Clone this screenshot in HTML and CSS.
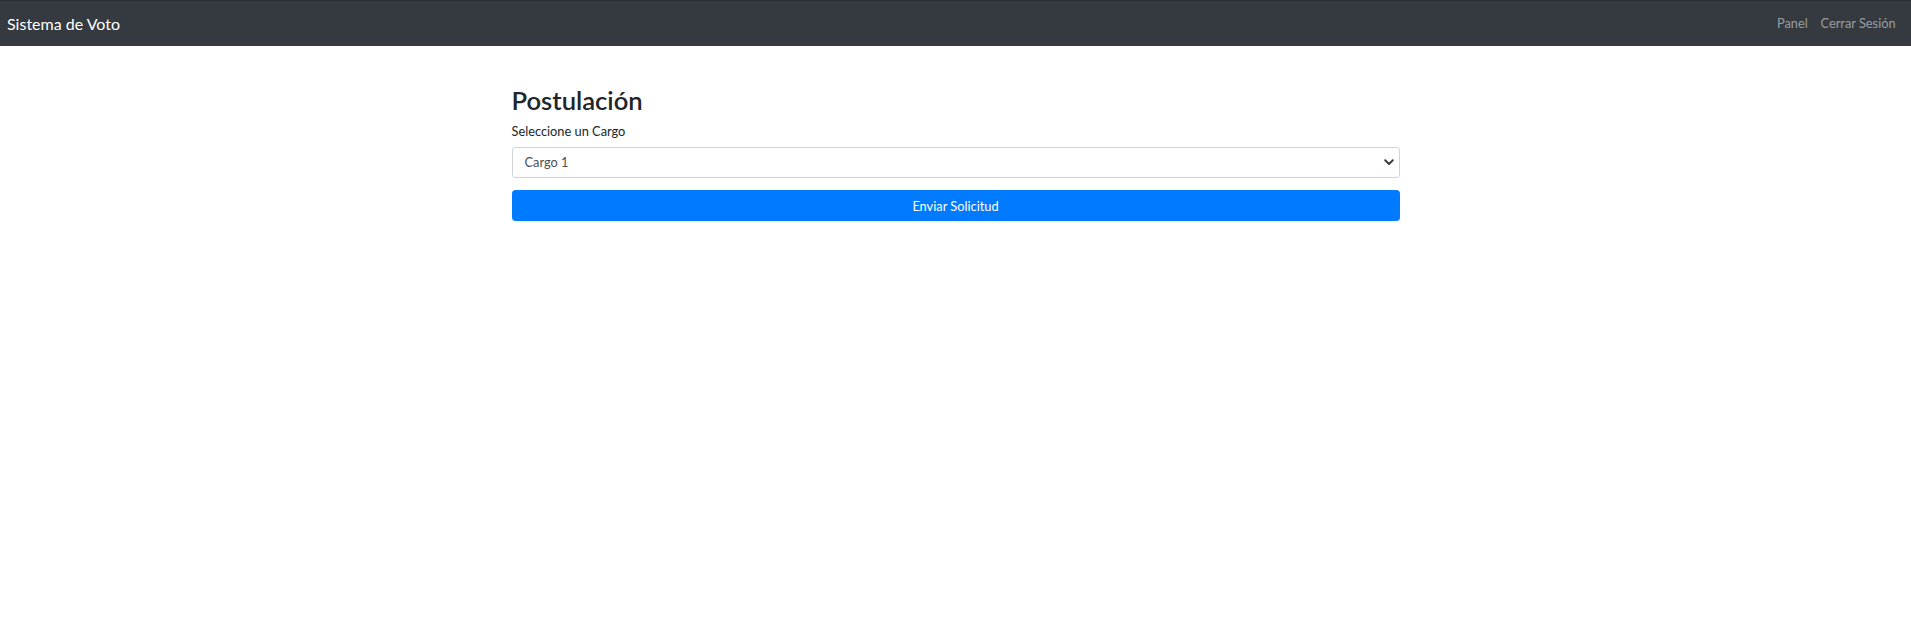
FILE: index.html
```html
<!DOCTYPE html>
<html lang="es">
<head>
<meta charset="utf-8">
<title>Sistema de Voto</title>
<link rel="stylesheet" href="styles.css">
</head>
<body>
<nav class="navbar">
  <a class="brand" href="#">Sistema de Voto</a>
  <ul class="nav">
    <li><a class="nav-link" href="#">Panel</a></li>
    <li><a class="nav-link" href="#">Cerrar Sesión</a></li>
  </ul>
</nav>
<main class="container">
  <h2 class="title">Postulación</h2>
  <form class="form">
    <div class="form-group">
      <label class="label" for="cargo">Seleccione un Cargo</label>
      <div class="select-wrap">
        <select id="cargo" class="form-control">
          <option>Cargo 1</option>
          <option>Cargo 2</option>
        </select>
        <svg class="chevron" width="10" height="7" viewBox="0 0 10 7" aria-hidden="true"><path d="M1.2 1.3 L5 5 L8.8 1.3" fill="none" stroke="#3a3f44" stroke-width="2" stroke-linecap="round" stroke-linejoin="round"/></svg>
      </div>
    </div>
    <button type="button" class="btn">Enviar Solicitud</button>
  </form>
</main>
</body>
</html>
```

FILE: styles.css
```css
* { box-sizing: border-box; }
html, body { margin: 0; padding: 0; }
body {
  font-family: Lato, "Open Sans", "Liberation Sans", sans-serif;
  font-size: 12.8px;
  line-height: 1.5;
  color: #212529;
  background: #fff;
}
.navbar {
  height: 46px;
  background: #343a40;
  border-top: 1px solid #2a2e33;
  display: flex;
  align-items: center;
  justify-content: space-between;
  padding: 0 9px 0 7px;
}
.brand {
  color: #fff;
  text-decoration: none;
  font-size: 16px;
  line-height: 1;
}
.nav {
  list-style: none;
  margin: 0;
  padding: 0;
  display: flex;
}
.nav-link {
  display: block;
  padding: 0 6.4px;
  color: rgba(255,255,255,.5);
  text-decoration: none;
  font-size: 12.8px;
}
.container {
  width: 888px;
  margin: 0 auto;
  padding-top: 39px;
}
.title {
  margin: 0 0 6.4px;
  font-size: 25.6px;
  font-weight: 600;
  line-height: 1.2;
  color: #212529;
}
.form-group { margin-bottom: 12.8px; }
.label {
  display: block;
  margin-bottom: 6px;
  font-size: 12.8px;
}
.select-wrap { position: relative; }
.form-control {
  display: block;
  width: 100%;
  height: 30.4px;
  padding: 0 12px;
  font-family: inherit;
  font-size: 12.8px;
  color: #495057;
  background: #fff;
  border: 1px solid #ced4da;
  border-radius: 3.2px;
  appearance: none;
  -webkit-appearance: none;
  outline: none;
}
.chevron {
  position: absolute;
  right: 6px;
  top: 12px;
  pointer-events: none;
}
.btn {
  display: block;
  width: 100%;
  height: 30.4px;
  padding: 0;
  font-family: inherit;
  font-size: 12.8px;
  color: #fff;
  background: #007bff;
  border: 1px solid #007bff;
  border-radius: 3.2px;
  cursor: pointer;
}
```
